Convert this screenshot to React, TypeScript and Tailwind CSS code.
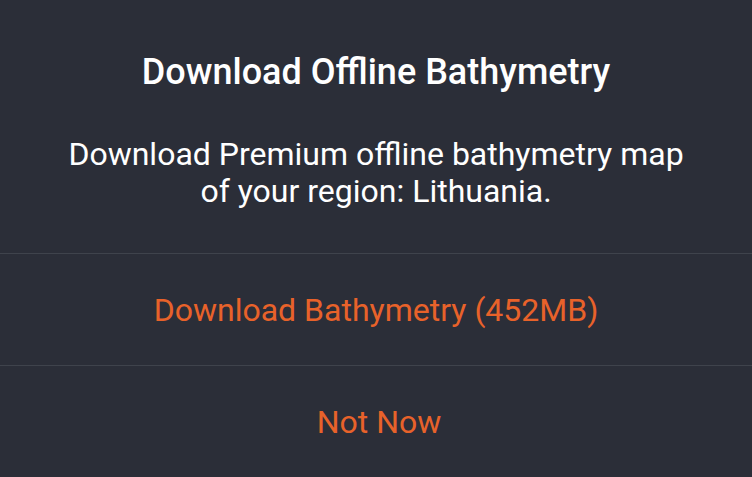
export default function App() {
  return (
    <div className="w-[752px] h-[477px] bg-[#2b2e38] flex flex-col text-center" style={{ fontFamily: "Roboto, 'Noto Sans', sans-serif" }}>
      <div className="h-[253px] flex flex-col items-center pt-[52px]">
        <h1 className="text-[36px] leading-[40px] font-medium text-white whitespace-nowrap">Download Offline Bathymetry</h1>
        <p className="mt-[44px] text-[32px] leading-[37px] text-white whitespace-nowrap">
          Download Premium offline bathymetry map
          <br />
          of your region: Lithuania.
        </p>
      </div>
      <div className="h-px bg-[#3f434c]" />
      <button className="h-[111px] flex items-center justify-center text-[32px] text-[#e8622a]">
        Download Bathymetry (452MB)
      </button>
      <div className="h-px bg-[#3f434c]" />
      <button className="flex-1 flex items-center justify-center pl-[6px] text-[32px] text-[#e8622a]">
        Not Now
      </button>
    </div>
  );
}
